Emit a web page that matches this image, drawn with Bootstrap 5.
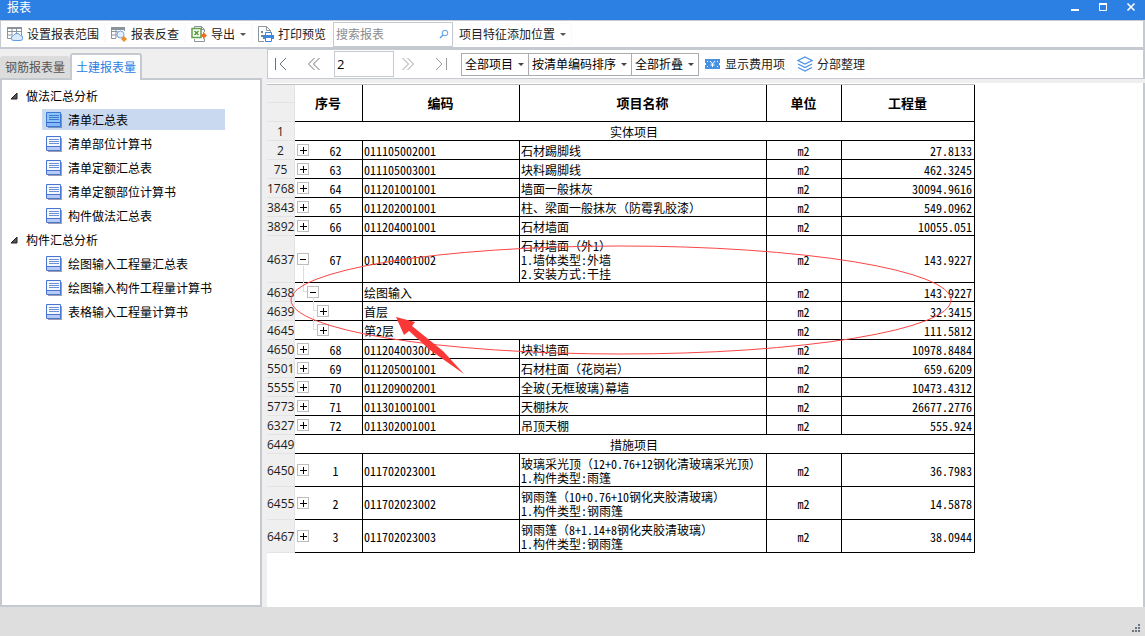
<!DOCTYPE html>
<html lang="zh-CN">
<head>
<meta charset="utf-8">
<meta name="viewport" content="width=device-width, initial-scale=1">
<title>报表</title>
<link rel="stylesheet" href="https://cdn.jsdelivr.net/npm/bootstrap@5.3.0/dist/css/bootstrap.min.css">
<style>
  :root { --edge: #c5cad1; --blue: #2d80e3; }
  body { font: 12px/16px "Noto Sans CJK SC", sans-serif; color: #222; background: #efefef; }
  .titlebar { background: var(--blue); height: 20px; padding: 0 8px 6px 7px; }
  .titlebar h1 { font-size: 12px; line-height: 14px; }
  .win-btn { width: 12px; height: 12px; margin-left: 16px; }
  .plain { border: 0; padding: 0; background: none; color: inherit; font-size: 12px; line-height: 16px; display: flex; align-items: center; }
  .toolbar { background: #fff; border: 1px solid var(--edge); border-width: 1px 2px 2px 1px; height: 29px; }
  .tool { height: 22px; padding: 0 5px; gap: 4px; border-radius: 3px; border: 1px solid #fafafa; white-space: nowrap; }
  .caret { width: 0; height: 0; border: 3px solid transparent; border-top-color: #555; border-bottom: 0; margin-left: 1px; }
  .search-wrap { width: 120px; height: 25px; border: 1px solid var(--edge); margin-left: 1px; }
  .search-wrap input { min-width: 0; border: 0; outline: 0; padding: 0 2px; font-size: 12px; }
  .search-wrap input::placeholder { color: #8c8c8c; }
  .search-wrap button { width: 22px; }
  .side { width: 262px; }
  .tabs { padding-top: 4px; height: 29px; }
  .tab-btn { height: 22px; padding: 0 5px; background: #dcdcdc; color: #555; border-radius: 3px 3px 0 0; }
  .tab-btn.active { height: 27px; padding: 0 4px 2px; background: #fff; color: var(--blue); border: 2px solid var(--edge); border-bottom: 0; margin-bottom: -2px; position: relative; }
  .tree { background: #fff; border: 2px solid var(--edge); padding: 5px 35px 0 0; color: #000; }
  .tree-group { height: 21px; margin: 0 0 3px 8px; gap: 6px; }
  .tree-item { height: 21px; margin: 0 0 3px 40px; padding-left: 4px; gap: 6px; color: #000; text-decoration: none; white-space: nowrap; }
  .tree-item.active { background: #c9d9ef; }
  .view { padding-left: 5px; }
  .navbar-report { background: #fff; border: 2px solid var(--edge); border-width: 1px 2px 1px 1px; height: 30px; }
  .page-btn { width: 33px; height: 22px; padding-left: 6px; }
  .page-input { width: 60px; height: 26px; border: 1px solid var(--edge); padding: 0 2px; font: 13px "Open Sans", sans-serif; margin-right: 1px; }
  .picker { height: 23px; border: 1px solid #a9adb0; border-radius: 0; padding: 0 14px 0 3px; color: #000; appearance: none; font-size: 12px;
    background: #fff url("data:image/svg+xml,%3Csvg xmlns='http://www.w3.org/2000/svg' width='6' height='3'%3E%3Cpath d='M0 0h6L3 3z' fill='%23444'/%3E%3C/svg%3E") no-repeat right 4px center; }
  .picker + .picker { margin-left: -1px; }
  .sheet { background: #fff; margin-top: 4px; border-right: 2px solid var(--edge); }
  .report { width: 708px; table-layout: fixed; border-collapse: separate; border-spacing: 0; color: #000; line-height: 14px; border-top: 1px solid #c0c0c0; margin-top: 1px; font-feature-settings: "hwid"; }
  .report td, .report th { height: 19px; padding: 2px 2px 0 1px; border: 0 solid #000; border-width: 0 1px 1px 0; vertical-align: middle; }
  .report .line { height: 19px; padding: 2px 0 0; background: #efefef; border-color: #e3e3e3; border-width: 0 1px 1px 0; font: 12px/16px "Open Sans", sans-serif; text-align: center; font-feature-settings: normal; color: #1c1c1c; }
  .report thead .line { height: 18px; }
  .report thead tr + tr .line { height: 19px; }
  .report thead th { font-size: 13px; text-align: center; padding-top: 0; }
  .report .seq { padding: 0 0 0 2px; border-right-width: 1px; }
  .report .num { text-align: right; }
  .report .mid { text-align: center; }
  .wide { font-feature-settings: normal; }
  .seq-row { display: flex; align-items: center; }
  .seq-row span { flex: 1; text-align: center; padding-top: 2px; }
  .twist { width: 12px; height: 12px; padding: 0; border: 1px solid #bdbdbd; background: linear-gradient(#000, #000) center / 6px 1px no-repeat #fff; position: relative; }
  .twist.plus { background: linear-gradient(#000, #000) 2px 5px / 7px 1px no-repeat, linear-gradient(#000, #000) 5px 2px / 1px 7px no-repeat #fff; }
  .lvl-1 { margin-left: 10px; }
  .lvl-2 { margin-left: 20px; }
  .lvl-1::before, .lvl-2::before { content: ""; position: absolute; left: -5px; bottom: 5px; width: 4px; border: 1px solid #dedede; border-width: 0 0 1px 1px; }
  .lvl-1::before { height: 26px; }
  .lvl-2::before { height: 14px; }
  .markup { position: absolute; left: 0; top: 0; pointer-events: none; }
  .status { background: #dededf; height: 29px; padding: 0 3px 3px; }
</style>
</head>
<body class="d-flex flex-column vh-100 overflow-hidden">
<svg class="d-none">
  <symbol id="doc" viewBox="0 0 16 16"><path d="M2 2h14v14H2z" fill="#9aa0ae"/><path d="M.5.5h14v14H.5z" fill="#f4f8ff" stroke="#4a74cf"/><path d="M1 10h13v4H1z" fill="#b5cbfa"/><path d="M3 3.500h10M3 5.500h10M3 7.500h10" stroke="#6d90dc"/><path d="M1 10.500h13" stroke="#4a74cf"/></symbol>
  <symbol id="doc-on" viewBox="0 0 16 16"><path d="M2 2h14v14H2z" fill="#7795bd"/><path d="M.5.5h14v14H.5z" fill="#8cc4f7" stroke="#3c78d0"/><path d="M1 10h13v4H1z" fill="#85b8fb"/><path d="M3 3.500h10M3 5.500h10M3 7.500h10" stroke="#3f78cf"/><path d="M1 10.500h13" stroke="#3269c8"/></symbol>
</svg>

<header class="titlebar d-flex align-items-center text-white flex-shrink-0">
  <h1 class="m-0 fw-normal me-auto">报表</h1>
  <button class="plain win-btn" aria-label="最小化"><svg width="12" height="12"><path d="M2 9h8" stroke="#fff" stroke-width="2"/></svg></button>
  <button class="plain win-btn" aria-label="最大化"><svg width="12" height="12"><path d="M2.500 3v6.500h7V3" fill="none" stroke="#fff"/><path d="M2 3h8" stroke="#fff" stroke-width="2"/></svg></button>
  <button class="plain win-btn" aria-label="关闭"><svg width="12" height="12"><path d="M2.500 2.500l7 7m0-7l-7 7" stroke="#fff" stroke-width="1.600"/></svg></button>
</header>

<div class="toolbar d-flex align-items-center flex-shrink-0" role="toolbar">
  <button class="plain tool"><svg width="16" height="16"><path d="M.5 1v11.500H5M.5 5.500h14M.5 9h5M5 1v8M9.500 1v7M14.500 1v9" fill="none" stroke="#8b939b"/><path d="M0 1h15v2H0z" fill="#8b939b"/><path d="M7 14.500a2.500 2.500 0 01-.5-5 4 4 0 017 0 2.500 2.500 0 01-.5 5z" fill="#d9eafc" stroke="#5b9de6"/></svg>设置报表范围</button>
  <button class="plain tool"><svg width="16" height="16"><path d="M.5 1v11.500H5M.5 5.500h6M.5 9h5M5 1v11M9.500 1v3M13.500 1v4" fill="none" stroke="#8b939b"/><path d="M0 1h14v3H0z" fill="#8b939b"/><circle cx="9.500" cy="8.500" r="3.500" fill="#e3f0fe" stroke="#73a8e4"/><path d="M13 10l3 3-3 3-3-3z" fill="#ee8f24"/></svg>报表反查</button>
  <button class="plain tool"><svg width="16" height="16"><path d="M3.500 2V.5h7l3 3V6m0 6.500v3h-10V13M10.500.5v3h3" fill="none" stroke="#8b939b"/><path d="M1 2.500h9v9H1z" fill="#fff" stroke="#5fa04a" stroke-width="1.500"/><path d="M3.500 5l4 4m0-4l-4 4" stroke="#4f9b38" stroke-width="1.500"/><path d="M10 8h2V5.500L16 9.500l-4 4V11h-2z" fill="#f07027"/></svg>导出<span class="caret"></span></button>
  <button class="plain tool"><svg width="16" height="16"><path d="M6 15.500H.5V.5h8l4 4V6M8.500.5v4h4" fill="none" stroke="#8b939b"/><path d="M3 5h2v2H3zm0 4h2v2H3z" fill="#77828c"/><path d="M5 9h11v4h-2v-1H7v1H5z" fill="#3d87df"/><path d="M7.500 9V6.500h6V9m-6 3v3.500h6V12" fill="#fff" stroke="#3d87df"/></svg>打印预览</button>
  <div class="search-wrap d-flex">
    <input class="flex-grow-1" type="text" placeholder="搜索报表" aria-label="搜索报表">
    <button class="plain justify-content-center" aria-label="搜索"><svg width="10" height="10"><circle cx="6" cy="4" r="2.800" fill="none" stroke="#56a0e8"/><path d="M4 6L1 9" stroke="#56a0e8" stroke-width="1.500"/></svg></button>
  </div>
  <button class="plain tool">项目特征添加位置<span class="caret"></span></button>
</div>

<main class="d-flex flex-grow-1 overflow-hidden">
  <aside class="side d-flex flex-column flex-shrink-0">
    <div class="tabs d-flex align-items-end" role="tablist">
      <button class="plain tab-btn" role="tab">钢筋报表量</button>
      <button class="plain tab-btn active" role="tab">土建报表量</button>
    </div>
    <nav class="tree flex-grow-1">
      <div class="tree-group d-flex align-items-center"><svg width="10" height="8"><path d="M7 1v6H1z" fill="#555" stroke="#222"/></svg>做法汇总分析</div>
      <a class="tree-item d-flex align-items-center active" href="#"><svg width="16" height="16"><use href="#doc-on"/></svg>清单汇总表</a>
      <a class="tree-item d-flex align-items-center" href="#"><svg width="16" height="16"><use href="#doc"/></svg>清单部位计算书</a>
      <a class="tree-item d-flex align-items-center" href="#"><svg width="16" height="16"><use href="#doc"/></svg>清单定额汇总表</a>
      <a class="tree-item d-flex align-items-center" href="#"><svg width="16" height="16"><use href="#doc"/></svg>清单定额部位计算书</a>
      <a class="tree-item d-flex align-items-center" href="#"><svg width="16" height="16"><use href="#doc"/></svg>构件做法汇总表</a>
      <div class="tree-group d-flex align-items-center"><svg width="10" height="8"><path d="M7 1v6H1z" fill="#555" stroke="#222"/></svg>构件汇总分析</div>
      <a class="tree-item d-flex align-items-center" href="#"><svg width="16" height="16"><use href="#doc"/></svg>绘图输入工程量汇总表</a>
      <a class="tree-item d-flex align-items-center" href="#"><svg width="16" height="16"><use href="#doc"/></svg>绘图输入构件工程量计算书</a>
      <a class="tree-item d-flex align-items-center" href="#"><svg width="16" height="16"><use href="#doc"/></svg>表格输入工程量计算书</a>
    </nav>
  </aside>

  <section class="view d-flex flex-column flex-grow-1 overflow-hidden">
    <div class="navbar-report d-flex align-items-center flex-shrink-0" role="toolbar">
      <button class="plain page-btn" aria-label="首页"><svg width="14" height="14"><path d="M1.500 1v12M12 1L6 7l6 6" fill="none" stroke="#5f7386"/></svg></button>
      <button class="plain page-btn" aria-label="上一页"><svg width="14" height="14"><path d="M7.500 1l-6 6 6 6M12.500 1l-6 6 6 6" fill="none" stroke="#6f7378"/></svg></button>
      <input class="page-input" type="text" value="2" aria-label="页码">
      <button class="plain page-btn" aria-label="下一页"><svg width="14" height="14"><path d="M1.500 1l6 6-6 6M6.500 1l6 6-6 6" fill="none" stroke="#999da1"/></svg></button>
      <button class="plain page-btn" aria-label="末页"><svg width="14" height="14"><path d="M12.500 1v12M2 1l6 6-6 6" fill="none" stroke="#999da1"/></svg></button>
      <select class="picker" aria-label="项目范围"><option>全部项目</option></select>
      <select class="picker" aria-label="排序"><option>按清单编码排序</option></select>
      <select class="picker" aria-label="折叠"><option>全部折叠</option></select>
      <button class="plain tool"><svg width="16" height="16"><path d="M0 3h15v10H0z" fill="#4790e2"/><path d="M5 5l2.500 3L10 5M7.500 8v3M5.500 9h4" fill="none" stroke="#fff"/><path d="M2 5h1v1H2zm10 0h1v1h-1zM2 10h1v1H2zm10 0h1v1h-1zM0 7h1v2H0zm14 0h1v2h-1z" fill="#fff"/></svg>显示费用项</button>
      <button class="plain tool"><svg width="16" height="16"><path d="M8 1l7 3.500L8 8 1 4.500z M1 8l7 3.500L15 8M1 11.500L8 15l7-3.500" fill="none" stroke="#4c93e2" stroke-width="1.200"/></svg>分部整理</button>
    </div>

    <div class="sheet flex-grow-1 position-relative overflow-hidden">
      <table class="report">
        <colgroup><col style="width:28px"><col style="width:68px"><col style="width:157px"><col style="width:247px"><col style="width:75px"><col style="width:133px"></colgroup>
        <thead>
          <tr><td class="line"></td><th rowspan="2">序号</th><th rowspan="2">编码</th><th rowspan="2">项目名称</th><th rowspan="2">单位</th><th rowspan="2">工程量</th></tr>
          <tr><td class="line"></td></tr>
        </thead>
        <tbody>
          <tr><td class="line">1</td><td class="mid" colspan="5">实体项目</td></tr>
          <tr><td class="line">2</td><td class="seq"><div class="seq-row"><button class="twist plus" aria-label="展开"></button><span>62</span></div></td><td>011105002001</td><td>石材踢脚线</td><td class="mid">m2</td><td class="num">27.8133</td></tr>
          <tr><td class="line">75</td><td class="seq"><div class="seq-row"><button class="twist plus" aria-label="展开"></button><span>63</span></div></td><td>011105003001</td><td>块料踢脚线</td><td class="mid">m2</td><td class="num">462.3245</td></tr>
          <tr><td class="line">1768</td><td class="seq"><div class="seq-row"><button class="twist plus" aria-label="展开"></button><span>64</span></div></td><td>011201001001</td><td>墙面一般抹灰</td><td class="mid">m2</td><td class="num">30094.9616</td></tr>
          <tr><td class="line">3843</td><td class="seq"><div class="seq-row"><button class="twist plus" aria-label="展开"></button><span>65</span></div></td><td>011202001001</td><td class="wide">柱、梁面一般抹灰（防霉乳胶漆）</td><td class="mid">m2</td><td class="num">549.0962</td></tr>
          <tr><td class="line">3892</td><td class="seq"><div class="seq-row"><button class="twist plus" aria-label="展开"></button><span>66</span></div></td><td>011204001001</td><td>石材墙面</td><td class="mid">m2</td><td class="num">10055.051</td></tr>
          <tr style="height:47px"><td class="line">4637</td><td class="seq"><div class="seq-row"><button class="twist" aria-label="折叠"></button><span>67</span></div></td><td>011204001002</td><td>石材墙面<span class="wide">（</span>外1<span class="wide">）</span><br>1.墙体类型:外墙<br>2.安装方式:干挂</td><td class="mid">m2</td><td class="num">143.9227</td></tr>
          <tr><td class="line">4638</td><td class="seq"><div class="seq-row"><button class="twist lvl-1" aria-label="折叠"></button></div></td><td colspan="2">绘图输入</td><td class="mid">m2</td><td class="num">143.9227</td></tr>
          <tr><td class="line">4639</td><td class="seq"><div class="seq-row"><button class="twist plus lvl-2" aria-label="展开"></button></div></td><td colspan="2">首层</td><td class="mid">m2</td><td class="num">32.3415</td></tr>
          <tr><td class="line">4645</td><td class="seq"><div class="seq-row"><button class="twist plus lvl-2" aria-label="展开"></button></div></td><td colspan="2">第2层</td><td class="mid">m2</td><td class="num">111.5812</td></tr>
          <tr><td class="line">4650</td><td class="seq"><div class="seq-row"><button class="twist plus" aria-label="展开"></button><span>68</span></div></td><td>011204003001</td><td>块料墙面</td><td class="mid">m2</td><td class="num">10978.8484</td></tr>
          <tr><td class="line">5501</td><td class="seq"><div class="seq-row"><button class="twist plus" aria-label="展开"></button><span>69</span></div></td><td>011205001001</td><td class="wide">石材柱面（花岗岩）</td><td class="mid">m2</td><td class="num">659.6209</td></tr>
          <tr><td class="line">5555</td><td class="seq"><div class="seq-row"><button class="twist plus" aria-label="展开"></button><span>70</span></div></td><td>011209002001</td><td>全玻(无框玻璃)幕墙</td><td class="mid">m2</td><td class="num">10473.4312</td></tr>
          <tr><td class="line">5773</td><td class="seq"><div class="seq-row"><button class="twist plus" aria-label="展开"></button><span>71</span></div></td><td>011301001001</td><td>天棚抹灰</td><td class="mid">m2</td><td class="num">26677.2776</td></tr>
          <tr><td class="line">6327</td><td class="seq"><div class="seq-row"><button class="twist plus" aria-label="展开"></button><span>72</span></div></td><td>011302001001</td><td>吊顶天棚</td><td class="mid">m2</td><td class="num">555.924</td></tr>
          <tr><td class="line">6449</td><td class="mid" colspan="5">措施项目</td></tr>
          <tr style="height:33px"><td class="line">6450</td><td class="seq"><div class="seq-row"><button class="twist plus" aria-label="展开"></button><span>1</span></div></td><td>011702023001</td><td>玻璃采光顶<span class="wide">（</span>12+0.76+12钢化清玻璃采光顶<span class="wide">）</span><br>1.构件类型:雨篷</td><td class="mid">m2</td><td class="num">36.7983</td></tr>
          <tr style="height:33px"><td class="line">6455</td><td class="seq"><div class="seq-row"><button class="twist plus" aria-label="展开"></button><span>2</span></div></td><td>011702023002</td><td>钢雨篷<span class="wide">（</span>10+0.76+10钢化夹胶清玻璃<span class="wide">）</span><br>1.构件类型:钢雨篷</td><td class="mid">m2</td><td class="num">14.5878</td></tr>
          <tr style="height:33px"><td class="line">6467</td><td class="seq"><div class="seq-row"><button class="twist plus" aria-label="展开"></button><span>3</span></div></td><td>011702023003</td><td>钢雨篷<span class="wide">（</span>8+1.14+8钢化夹胶清玻璃<span class="wide">）</span><br>1.构件类型:钢雨篷</td><td class="mid">m2</td><td class="num">38.0944</td></tr>
        </tbody>
      </table>
      <svg class="markup" width="708" height="300"><ellipse cx="354" cy="217" rx="330" ry="54" fill="none" stroke="#fb4646"/><path d="M129 234L148 239L145 243L176 268L197 291L163 267L142 248L137 252z" fill="#fb3838"/></svg>
    </div>
  </section>
</main>

<footer class="status d-flex justify-content-end align-items-end flex-shrink-0"><svg width="10" height="10"><path d="M6 1h2v2H6zM3 4h2v2H3zm3 0h2v2H6zM0 7h2v2H0zm3 0h2v2H3zm3 0h2v2H6z" fill="#6b7480"/></svg></footer>
<script src="https://cdn.jsdelivr.net/npm/bootstrap@5.3.0/dist/js/bootstrap.bundle.min.js"></script>
</body>
</html>
